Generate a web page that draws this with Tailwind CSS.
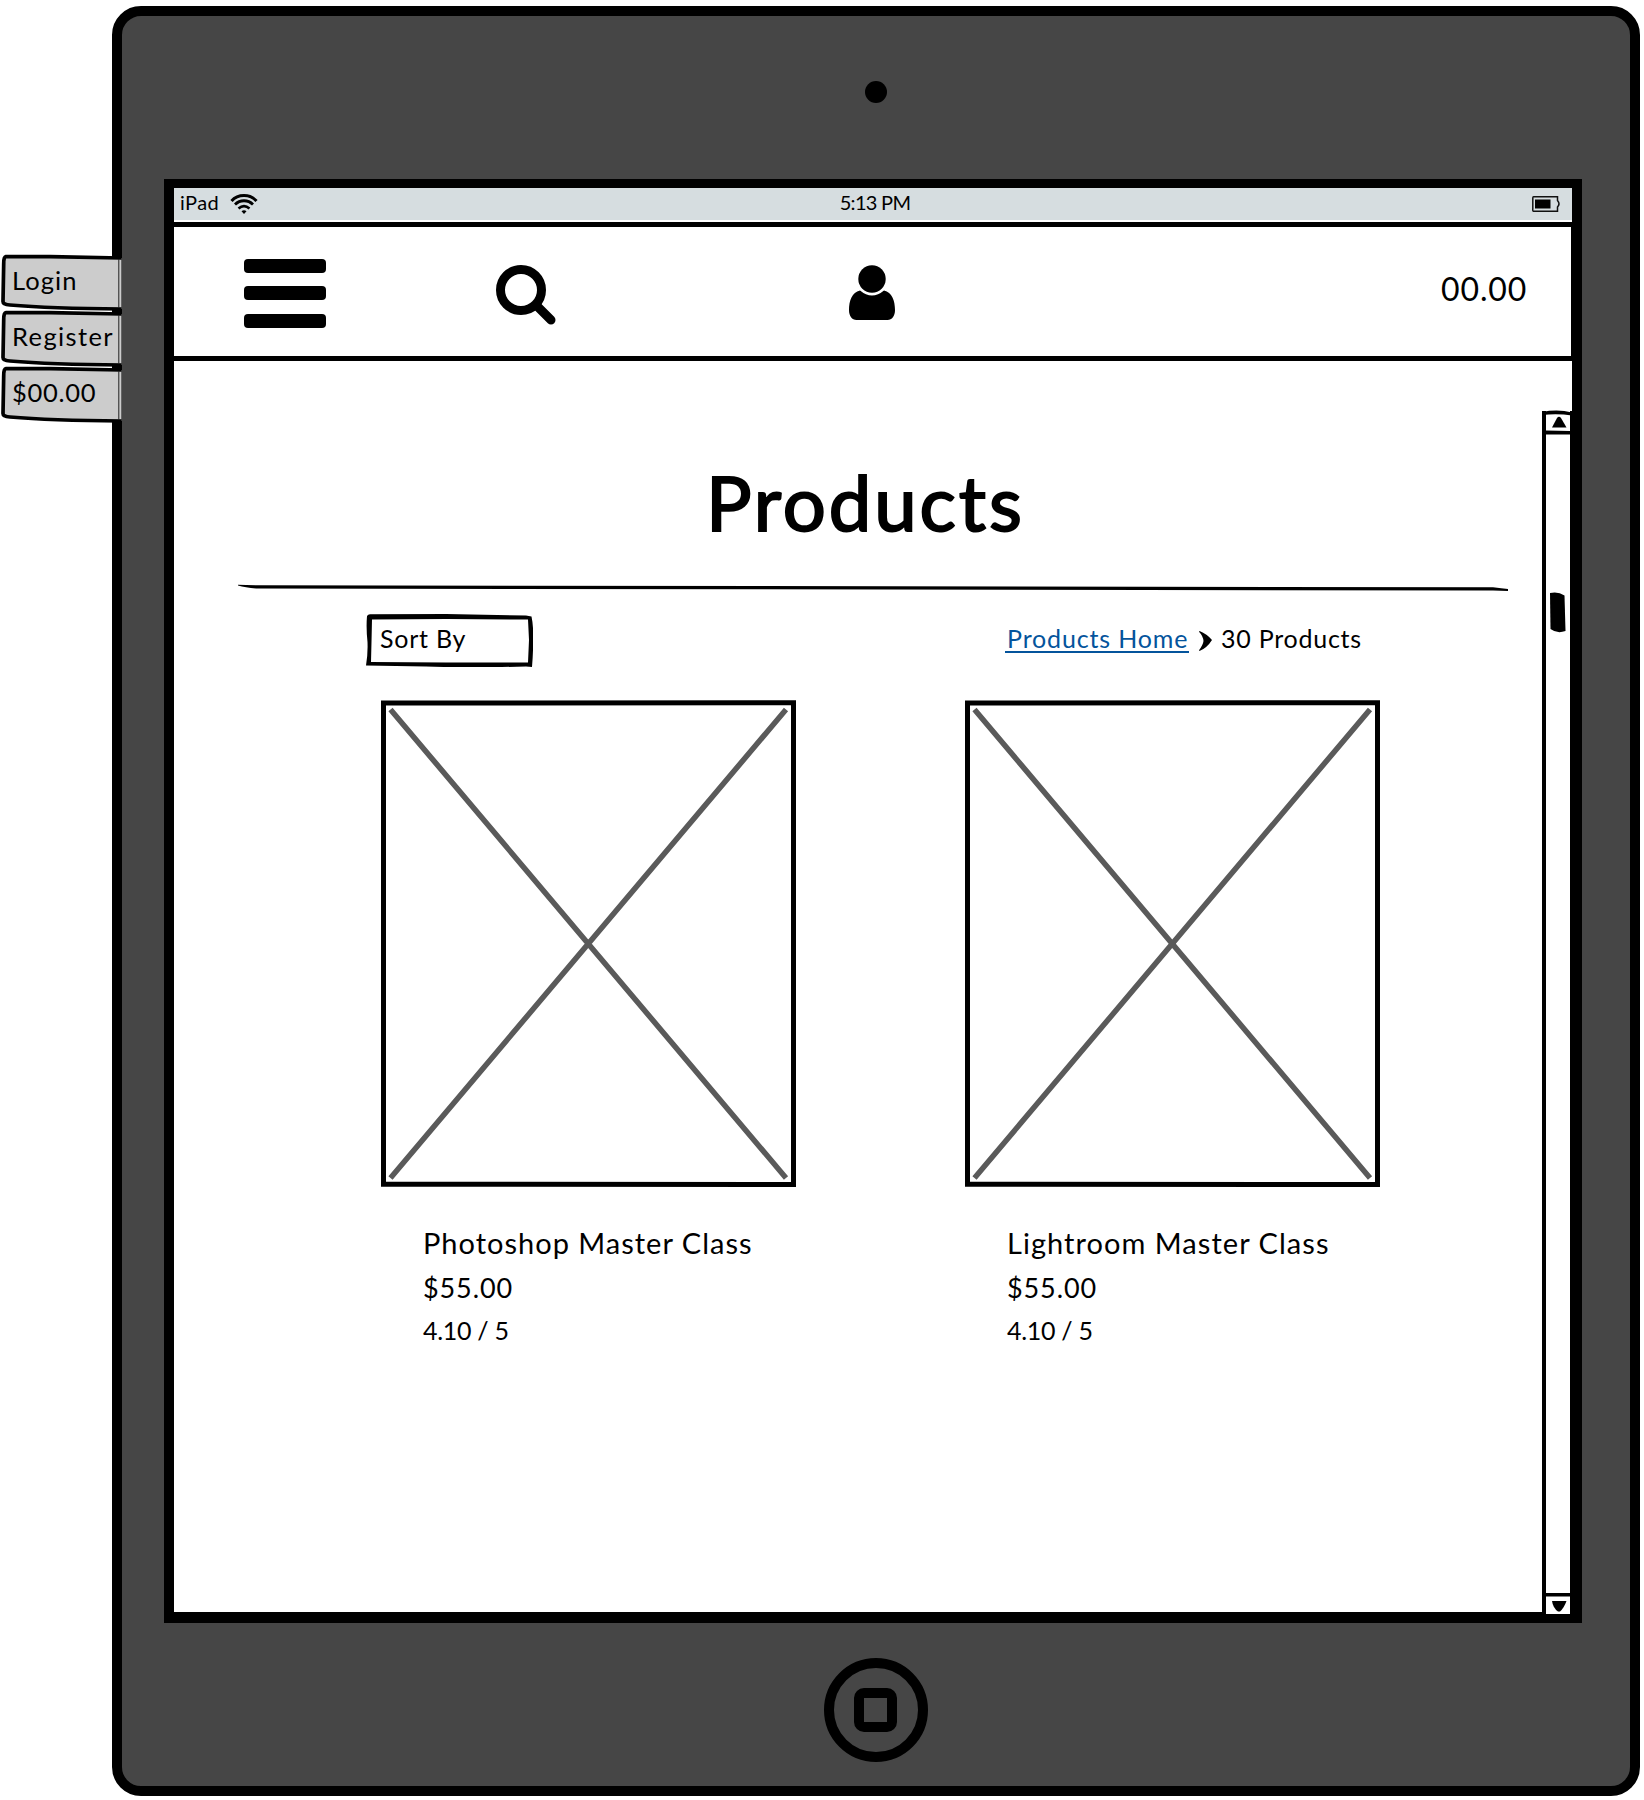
<!DOCTYPE html>
<html lang="en">
<head>
<meta charset="utf-8">
<title>Products</title>
<script src="https://cdn.jsdelivr.net/npm/@tailwindcss/browser@4"></script>
</head>
<body class="bg-white text-black font-['Lato',sans-serif]">
<div class="relative w-[1644px] h-[1800px] overflow-hidden pt-1.5 pl-28">
  <!-- Tablet -->
  <div class="flex flex-col w-[1528px] h-[1790px] border-10 border-black rounded-[29px] bg-[#464646]">
    <div class="h-[163px] shrink-0 pl-[743px] pt-[65px]"><div class="size-[22px] rounded-full bg-black"></div></div>
    <div class="ml-[42px] w-[1418px] h-[1444px] shrink-0 border-x-10 border-t-9 border-b-11 border-black bg-white flex flex-col">
      <!-- Status bar -->
      <div class="h-8 shrink-0 bg-[#d6dde0] grid grid-cols-3 items-center text-[20px] leading-8 pl-1.5 pr-3">
        <div class="flex items-center gap-[11px] -mt-1">
          <span class="whitespace-nowrap tracking-[0.4px]">iPad</span>
          <svg class="w-7 h-5 mt-1" viewBox="0 0 28 20" fill="none" stroke="#000"><path d="M1.5 7C8-.2 20-.2 26.500 7" stroke-width="3"/><path d="M5 10.500C10 5.500 18 5.500 23 10.500" stroke-width="2.800"/><path d="M8.500 14.500C12 11.500 16 11.500 19.500 14.500" stroke-width="2.600"/><path d="M11.500 17.200Q14 15.200 16.500 17.200L14 20z" fill="#000" stroke="none"/></svg>
        </div>
        <div class="text-center -mt-1 pl-2.5"><span class="whitespace-nowrap tracking-[-0.7px]">5:13 PM</span></div>
        <svg class="w-7 h-4 justify-self-end" viewBox="0 0 28 16" fill="none" stroke="#111" stroke-width="1.500"><path d="M1.500 .8H25.500V4.500Q28.500 8 25.500 11V15.200H1.500Q.5 15 .8 13V2Q.8.8 1.500.8z"/><path d="M3 3.500H18.500V12.500H3z" fill="#000" stroke="none"/></svg>
      </div>
      <!-- Header -->
      <header class="mt-0.5 h-[139px] shrink-0 border-t-5 border-b-5 border-r border-black flex items-center">
        <div class="ml-[70px] mt-[3px] w-[82px] flex flex-col gap-[13.500px]">
          <div class="h-3.5 rounded bg-black"></div><div class="h-3.5 rounded bg-black"></div><div class="h-3.5 rounded bg-black"></div>
        </div>
        <svg class="ml-[170px] mt-[7px] w-[60px] h-[60px]" viewBox="0 0 60 60" fill="none" stroke="#000"><circle cx="25" cy="25" r="20.500" stroke-width="9"/><path d="M42 42L55 55" stroke-width="9" stroke-linecap="round"/></svg>
        <svg class="ml-[293px] mt-[3px] w-[46px] h-[56px]" viewBox="0 0 46 56"><circle cx="23" cy="14" r="13.700"/><path d="M11 25.500Q17 30.500 23 30.500T35 25.500C43 27 46 36 46 45C46 51 43 55 38.500 55H7.500C3 55 0 51 0 45C0 36 3 27 11 25.500z"/></svg>
        <span class="ml-[546px] -mt-[5px] text-[32px] leading-10 whitespace-nowrap tracking-[0.9px]">00.00</span>
      </header>
      <div class="flex flex-1">
        <main class="w-[1368px] pt-[93px]">
          <h1 class="ml-[532px] w-max text-[76px] leading-[96px] tracking-[2.9px] [-webkit-text-stroke:2px_black]">Products</h1>
          <svg class="mt-[34px] ml-16 w-[1272px] h-2 block" viewBox="0 0 1272 8"><path d="M0 .8Q8 1 20 1.200L1255 3.300Q1264 4.200 1270 5V7L1255 6.500L20 4.500Q8 4 0 1.500z"/></svg>
          <div class="mt-[22px] h-[53px] flex items-start">
            <div class="ml-[192px] w-[167px] h-[53px] relative flex items-center pb-1 pl-[14px]">
              <svg class="absolute inset-0 w-full h-full" viewBox="0 0 167 53"><path fill-rule="evenodd" d="M1 2Q2 .3 4 .3L80 0L160 1.500L165.500 2.500Q167.500 12 167 22Q167.500 35 166 53L160 52.500Q100 54 60 52.500L0 51.500Q2 40 1.500 28Q0 14 1 2zM6 5.500L5.500 28L5 48L80 48.500L162 48.500L163 26L162 5.500L80 5z"/></svg>
              <span class="text-[25px] whitespace-nowrap tracking-[0.75px]">Sort By</span>
            </div>
            <div class="ml-[472px] flex items-start text-[25px] leading-[30px]">
              <a class="pt-[9px] w-[184px] h-[39px] pl-0.5 border-b-2 border-[#04549c] text-[#04549c] whitespace-nowrap tracking-[0.85px]">Products Home</a>
              <svg class="mt-[17px] ml-2.5 w-[13px] h-5" viewBox="0 0 13 20"><path d="M.5 0Q8 3 13 9Q8 17 .5 20L0 19.200Q4 14 4.500 10Q4 5 0 .8z"/></svg>
              <span class="mt-[9px] ml-[9px] whitespace-nowrap tracking-[0.75px]">30 Products</span>
            </div>
          </div>
          <div class="mt-[33px] ml-[207px] flex gap-[169px]">
            <article class="w-[415px]">
              <svg class="w-[415px] h-[487px] block" viewBox="0 0 415 487" fill="none"><path d="M9.500 9.500L405 478M405 9.500L9.500 478" stroke="#5a5a5a" stroke-width="5.500"/><path d="M2.500 3L412.500 2.800V484.500L2.500 484.300z" stroke="#000" stroke-width="5"/></svg>
              <div class="ml-[42px] whitespace-nowrap">
                <h2 class="w-max mt-10 text-[29px] leading-8 tracking-[1px]">Photoshop Master Class</h2>
                <p class="w-max mt-[13px] text-[27px] leading-8 tracking-[0.9px]">$55.00</p>
                <p class="w-max mt-2.5 text-[25px] leading-8 tracking-[-0.3px]">4.10 / 5</p>
              </div>
            </article>
            <article class="w-[415px]">
              <svg class="w-[415px] h-[487px] block" viewBox="0 0 415 487" fill="none"><path d="M9.500 9.500L405 478M405 9.500L9.500 478" stroke="#5a5a5a" stroke-width="5.500"/><path d="M2.500 3L412.500 2.800V484.500L2.500 484.300z" stroke="#000" stroke-width="5"/></svg>
              <div class="ml-[42px] whitespace-nowrap">
                <h2 class="w-max mt-10 text-[29px] leading-8 tracking-[1.04px]">Lightroom Master Class</h2>
                <p class="w-max mt-[13px] text-[27px] leading-8 tracking-[0.9px]">$55.00</p>
                <p class="w-max mt-2.5 text-[25px] leading-8 tracking-[-0.3px]">4.10 / 5</p>
              </div>
            </article>
          </div>
        </main>
        <!-- Scrollbar -->
        <div class="mt-[50px] -mb-[2px] w-[30px] border-l-4 border-r-2 border-black flex flex-col">
          <svg class="w-6 h-6 shrink-0 overflow-visible" viewBox="0 0 24 24"><path d="M-4 1Q12-2 26 1.500V4.500Q12 2.500-4 4z"/><path d="M6 16.500L11 7Q13 4.500 15 7L20.500 16.500z"/><path d="M0 19.500L24 20V23.500H0z"/></svg>
          <svg class="mt-[157px] ml-1 w-4 h-[41px] shrink-0" viewBox="0 0 16 41"><path d="M0 1Q8-1 14.500 3.500L15.500 39Q7 42 .5 37z"/></svg>
          <svg class="mt-auto w-6 h-[21px] bg-white" viewBox="0 0 24 21"><path d="M0 0H24V3.500H0z"/><path d="M6 8H20.500Q18 15 14 18.500H12Q7 15 6 8z"/></svg>
        </div>
      </div>
    </div>
    <div class="pt-[35px] pl-[702px]">
      <div class="size-[104px] rounded-full border-10 border-black pt-[20px] pl-[20px]"><div class="w-[43px] h-11 rounded-[10px] border-10 border-black"></div></div>
    </div>
  </div>
  <!-- Account tabs pinned to the tablet's left edge -->
  <nav class="absolute left-0 top-[254px] w-[122px] text-[25.500px] whitespace-nowrap">
    <div class="relative h-14 pl-3 pt-[11px] leading-[31px]">
      <svg class="absolute left-0 top-0 w-[122px] h-[58px]" viewBox="0 0 122 58"><path d="M4 2.500L50 2.200L121.500 4V55L50 54L3.500 50z" fill="#ccc"/><path d="M121.500 4L50 2.700L6 2.700Q3.500 3 3.700 10L3 47.500Q3 50.500 10 51Q50 54.500 121.500 55" fill="none" stroke="#000" stroke-width="3.700"/><path d="M118.800 5V54" stroke="#222"/></svg>
      <span class="relative tracking-[1.1px]">Login</span>
    </div>
    <div class="relative h-14 pl-3 pt-[11px] leading-[31px]">
      <svg class="absolute left-0 top-0 w-[122px] h-[58px]" viewBox="0 0 122 58"><path d="M4 2.500L50 2.200L121.500 4V55L50 54L3.500 50z" fill="#ccc"/><path d="M121.500 4L50 2.700L6 2.700Q3.500 3 3.700 10L3 47.500Q3 50.500 10 51Q50 54.500 121.500 55" fill="none" stroke="#000" stroke-width="3.700"/><path d="M118.800 5V54" stroke="#222"/></svg>
      <span class="relative tracking-[1.4px]">Register</span>
    </div>
    <div class="relative h-14 pl-3 pt-[11px] leading-[31px]">
      <svg class="absolute left-0 top-0 w-[122px] h-[58px]" viewBox="0 0 122 58"><path d="M4 2.500L50 2.200L121.500 4V55L50 54L3.500 50z" fill="#ccc"/><path d="M121.500 4L50 2.700L6 2.700Q3.500 3 3.700 10L3 47.500Q3 50.500 10 51Q50 54.500 121.500 55" fill="none" stroke="#000" stroke-width="3.700"/><path d="M118.800 5V54" stroke="#222"/></svg>
      <span class="relative tracking-[0.7px]">$00.00</span>
    </div>
  </nav>
</div>
</body>
</html>
